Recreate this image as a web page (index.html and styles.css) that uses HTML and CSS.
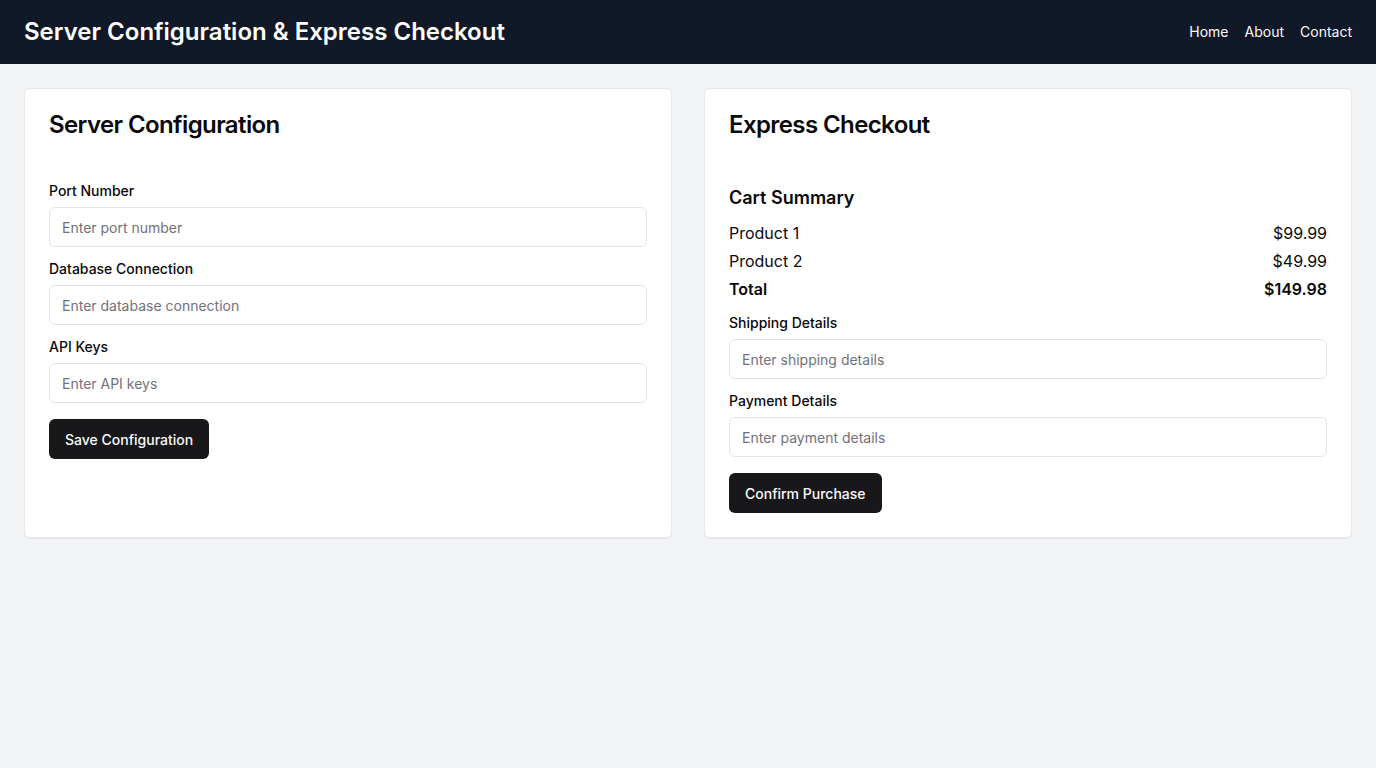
FILE: index.html
```html
<!DOCTYPE html>
<html lang="en">
<head>
<meta charset="utf-8">
<title>Server Configuration &amp; Express Checkout</title>
<link rel="stylesheet" href="styles.css">
</head>
<body>
<header class="topbar">
  <h1 class="brand">Server Configuration &amp; Express Checkout</h1>
  <nav class="nav">
    <a href="#">Home</a>
    <a href="#">About</a>
    <a href="#">Contact</a>
  </nav>
</header>
<main class="grid">
  <section class="card">
    <h2 class="card-title">Server Configuration</h2>
    <div class="field">
      <label>Port Number</label>
      <input type="text" placeholder="Enter port number">
    </div>
    <div class="field">
      <label>Database Connection</label>
      <input type="text" placeholder="Enter database connection">
    </div>
    <div class="field">
      <label>API Keys</label>
      <input type="text" placeholder="Enter API keys">
    </div>
    <button class="btn">Save Configuration</button>
  </section>
  <section class="card">
    <h2 class="card-title">Express Checkout</h2>
    <h3 class="sub-title">Cart Summary</h3>
    <div class="rows">
      <div class="row"><span>Product 1</span><span>$99.99</span></div>
      <div class="row"><span>Product 2</span><span>$49.99</span></div>
      <div class="row total"><span>Total</span><span>$149.98</span></div>
    </div>
    <div class="field">
      <label>Shipping Details</label>
      <input type="text" placeholder="Enter shipping details">
    </div>
    <div class="field">
      <label>Payment Details</label>
      <input type="text" placeholder="Enter payment details">
    </div>
    <button class="btn">Confirm Purchase</button>
  </section>
</main>
</body>
</html>
```

FILE: styles.css
```css
* { box-sizing: border-box; }
html, body { margin: 0; padding: 0; }
body {
  font-family: Inter, "Noto Sans", sans-serif;
  background: #f3f4f6;
  color: #09090b;
  min-height: 768px;
}
.topbar {
  height: 64px;
  background: #111827;
  display: flex;
  align-items: center;
  justify-content: space-between;
  padding: 0 24px;
}
.brand {
  margin: 0;
  font-size: 24px;
  line-height: 32px;
  font-weight: 600;
  color: #ffffff;
}
.nav { display: flex; gap: 16px; }
.nav a {
  color: #f9fafb;
  text-decoration: none;
  font-size: 14px;
  line-height: 20px;
}
.grid {
  display: grid;
  grid-template-columns: 1fr 1fr;
  gap: 32px;
  padding: 24px;
  align-items: stretch;
}
.card {
  background: #ffffff;
  border: 1px solid #e5e7eb;
  border-radius: 6px;
  box-shadow: 0 1px 2px rgba(0,0,0,0.05);
  padding: 24px;
  display: flex;
  flex-direction: column;
  align-items: flex-start;
}
.card-title {
  margin: 0 0 44px;
  font-size: 24px;
  line-height: 24px;
  font-weight: 600;
  letter-spacing: -0.6px;
}
.sub-title {
  margin: 3px 0 9px;
  font-size: 18px;
  line-height: 28px;
  font-weight: 600;
}
.rows {
  width: 100%;
  display: flex;
  flex-direction: column;
  gap: 4px;
  margin-bottom: 12px;
}
.row {
  display: flex;
  justify-content: space-between;
  font-size: 16px;
  line-height: 24px;
}
.row.total { font-weight: 600; }
.field {
  width: 100%;
  display: flex;
  flex-direction: column;
  gap: 6px;
  margin-bottom: 12px;
}
.field label {
  font-size: 14px;
  line-height: 20px;
  font-weight: 500;
}
.field input {
  height: 40px;
  width: 100%;
  border: 1px solid #e4e4e7;
  border-radius: 6px;
  padding: 0 12px;
  font-family: inherit;
  font-size: 14px;
  color: #09090b;
  background: #ffffff;
  outline: none;
}
.field input::placeholder { color: #71717a; }
.btn {
  margin-top: 4px;
  height: 40px;
  padding: 0 16px;
  border: none;
  border-radius: 6px;
  background: #18181b;
  color: #fafafa;
  font-family: inherit;
  font-size: 14px;
  font-weight: 500;
  cursor: pointer;
}
```
